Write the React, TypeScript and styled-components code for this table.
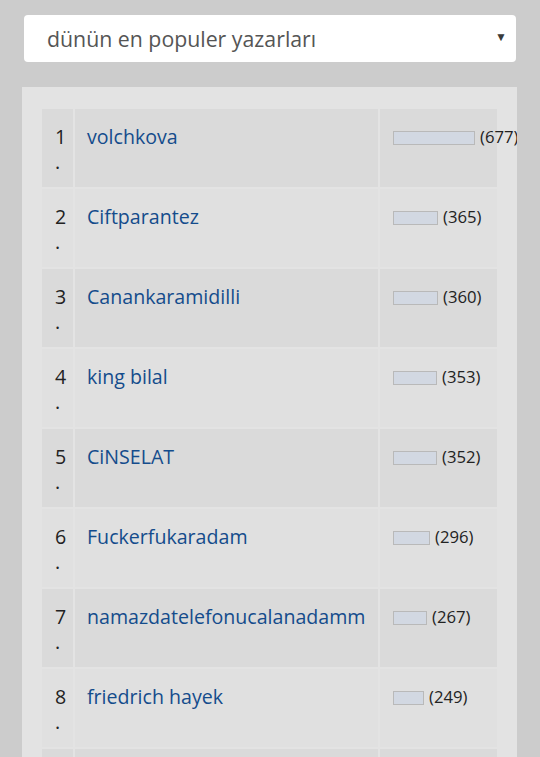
import styled, { createGlobalStyle } from "styled-components";

const GlobalStyle = createGlobalStyle`
    html, body {
        margin: 0;
        padding: 0;
        background: #cccccc;
        font-family: "Open Sans", "Liberation Sans", sans-serif;
    }
`;

const authors = [
    { name: "volchkova", count: 677 },
    { name: "Ciftparantez", count: 365 },
    { name: "Canankaramidilli", count: 360 },
    { name: "king bilal", count: 353 },
    { name: "CiNSELAT", count: 352 },
    { name: "Fuckerfukaradam", count: 296 },
    { name: "namazdatelefonucalanadamm", count: 267 },
    { name: "friedrich hayek", count: 249 },
];

const PageSc = styled.div`
    width: 495px;
    height: 742px;
    overflow: hidden;
    padding: 15px 0 0 22px;
`;

const SelectBoxSc = styled.div`
    display: flex;
    align-items: center;
    justify-content: space-between;
    margin-left: 2px;
    width: 492px;
    height: 47px;
    box-sizing: border-box;
    padding: 0 9px 0 23px;
    background: #ffffff;
    border-radius: 4px;
    color: #555555;
    font-size: 21.3px;
`;

const ArrowSc = styled.span`
    font-size: 12px;
    color: #3a3a3a;
    margin-top: -4px;
`;

const PanelSc = styled.div`
    margin-top: 25px;
    background: #e3e3e3;
    padding: 20px 18px;
`;

const TableSc = styled.table`
    width: 459px;
    table-layout: fixed;
    border-collapse: separate;
    border-spacing: 2px;
`;

const RowSc = styled.tr<{ $odd: boolean }>`
    background: ${props => (props.$odd ? "#dadada" : "#e0e0e0")};
`;

const CellSc = styled.td`
    padding: 15px 12px 13px;
    vertical-align: top;
    font-size: 19.6px;
    line-height: 25px;
    height: 50px;
`;

const RankCellSc = styled(CellSc)`
    padding-left: 13px;
    color: #222222;
`;

const NameLinkSc = styled.a`
    color: #144c8c;
    text-decoration: none;
`;

const CountCellSc = styled(CellSc)`
    padding-left: 13px;
    white-space: nowrap;
    overflow: visible;
`;

const CountWrapSc = styled.div`
    display: flex;
    align-items: center;
    gap: 5px;
    height: 25px;
    font-size: 16.7px;
    color: #222222;
`;

const BarSc = styled.span`
    display: inline-block;
    flex-shrink: 0;
    height: 12px;
    background: #d2d8e2;
    border: 1px solid #b9b9b9;
    margin-top: 2px;
`;

const App = () => {
    const max = authors[0].count;
    return (
        <>
            <GlobalStyle />
            <PageSc>
                <SelectBoxSc>
                    <span>dünün en populer yazarları</span>
                    <ArrowSc>▼</ArrowSc>
                </SelectBoxSc>
                <PanelSc>
                    <TableSc>
                        <colgroup>
                            <col style={{ width: 31 }} />
                            <col />
                            <col style={{ width: 117 }} />
                        </colgroup>
                        <tbody>
                            {authors.map((a, i) => (
                                <RowSc key={a.name} $odd={i % 2 === 0}>
                                    <RankCellSc>
                                        {i + 1}
                                        <br />.
                                    </RankCellSc>
                                    <CellSc>
                                        <NameLinkSc href="#">{a.name}</NameLinkSc>
                                    </CellSc>
                                    <CountCellSc>
                                        <CountWrapSc>
                                            <BarSc style={{ width: Math.round((a.count / max) * 80) }} />
                                            ({a.count})
                                        </CountWrapSc>
                                    </CountCellSc>
                                </RowSc>
                            ))}
                            {/* next row, scrolled below the fold */}
                            <RowSc $odd={true}>
                                <RankCellSc />
                                <CellSc />
                                <CountCellSc />
                            </RowSc>
                        </tbody>
                    </TableSc>
                </PanelSc>
            </PageSc>
        </>
    );
};

export default App;
